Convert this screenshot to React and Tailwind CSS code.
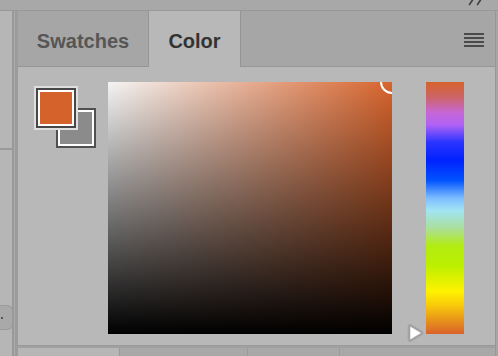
import React from 'react';

const FONT = { fontFamily: '"Liberation Sans", Arial, sans-serif' };

const Chevrons = () => (
  <svg className="absolute right-[14px] top-0" width="16" height="6" viewBox="0 0 16 6">
    <path d="M1.5 4.5 L4.5 0" stroke="#3f3f3f" strokeWidth="1.6" strokeLinecap="round" fill="none" />
    <path d="M9.5 4.5 L12.5 0" stroke="#3f3f3f" strokeWidth="1.6" strokeLinecap="round" fill="none" />
  </svg>
);

const Hamburger = () => (
  <div className="flex flex-col gap-[2px] w-[20px]">
    <div className="h-[2px] bg-[#4b4b4b]" />
    <div className="h-[2px] bg-[#4b4b4b]" />
    <div className="h-[2px] bg-[#4b4b4b]" />
    <div className="h-[2px] bg-[#4b4b4b]" />
  </div>
);

const Swatches = () => (
  <div className="relative w-[62px] h-[62px] mt-[4px] shrink-0">
    {/* background colour */}
    <div className="absolute left-[22px] top-[22px] w-[40px] h-[40px] border-2 border-[#505050] bg-white p-[2px]">
      <div className="w-full h-full bg-[#8b8b8b]" />
    </div>
    {/* foreground colour */}
    <div className="absolute left-0 top-0 w-[44px] h-[44px] border-2 border-[#dedede] bg-[#474747] p-[2px]">
      <div className="w-full h-full bg-white p-[2px]">
        <div className="w-full h-full bg-[#d5622a]" />
      </div>
    </div>
  </div>
);

const ColorField = () => (
  <div className="relative ml-[12px] w-[284px] h-[252px] shrink-0 overflow-hidden bg-[linear-gradient(to_bottom,rgba(0,0,0,0)_0%,rgba(0,0,0,0.45)_45%,#000_100%),linear-gradient(to_right,#f4f4f4,#d7642d)]">
    <div className="absolute right-[-12px] top-[-12px] w-[24px] h-[24px] rounded-full border-2 border-white" />
  </div>
);

const HueBar = () => (
  <div className="relative ml-[34px] w-[38px] h-[252px] shrink-0">
    <div className="w-full h-full bg-[linear-gradient(to_bottom,#d6632b_0%,#cc6466_6%,#c866d4_12%,#b062f6_17%,#2a34ff_24%,#0022ff_31%,#0052ff_39%,#7cbcff_46%,#a2e4f4_51%,#aadf9c_58%,#b2ec12_65%,#bcf000_73%,#fff200_83%,#f9cf08_88%,#d9622a_100%)]" />
    <svg className="absolute left-[-22px] top-[240px]" width="22" height="22" viewBox="0 0 22 22">
      <path d="M5 4.5 Q5 2.6 6.8 3.5 L17.6 10 Q18.8 11 17.6 12 L6.8 18.5 Q5 19.4 5 17.5 Z" fill="#ffffff" stroke="#a3a3a3" strokeWidth="2.6" strokeLinejoin="round" />
    </svg>
  </div>
);

export default function App() {
  return (
    <div className="w-[498px] h-[356px] overflow-hidden flex flex-col bg-[#a7a7a7]" style={FONT}>
      {/* top strip */}
      <div className="relative h-[11px] shrink-0 bg-[#a8a8a8] border-b border-[#989898]">
        <Chevrons />
      </div>

      <div className="flex flex-1 min-h-0">
        {/* left dock strip */}
        <div className="flex shrink-0">
          <div className="relative w-[12px] bg-[#b6b6b6] flex flex-col">
            <div className="h-[137px]" />
            <div className="h-[2px] bg-[#9a9a9a]" />
            <div className="absolute left-0 top-[294px] w-[13px] h-[25px] rounded-r-[6px] bg-[#a9a9a9] border border-l-0 border-[#9a9a9a] flex items-center">
              <div className="w-[2px] h-[2px] ml-[1px] bg-[#555]" />
            </div>
          </div>
          <div className="w-[2px] bg-[#999999]" />
          <div className="w-[1px] bg-[#ababab]" />
          <div className="w-[3px] bg-[#9c9c9c]" />
        </div>

        {/* panel */}
        <div className="flex-1 flex flex-col min-w-0">
          {/* tabs */}
          <div className="flex h-[56px] shrink-0">
            <div className="w-[131px] bg-[#a6a6a6] border-r border-b border-[#959595] flex items-center justify-center pt-[4px]">
              <span className="text-[20px] font-bold text-[#565656]">Swatches</span>
            </div>
            <div className="w-[92px] bg-[#b8b8b8] border-r border-[#959595] flex items-center justify-center pt-[4px]">
              <span className="text-[20px] font-bold text-[#333333]">Color</span>
            </div>
            <div className="flex-1 bg-[#a6a6a6] border-b border-[#979797] flex items-center justify-end pr-[11px] pt-[2px]">
              <Hamburger />
            </div>
          </div>

          {/* content */}
          <div className="h-[278px] shrink-0 bg-[#b8b8b8] flex items-start pl-[16px] pt-[15px]">
            <Swatches />
            <ColorField />
            <HueBar />
          </div>

          <div className="h-[3px] shrink-0 bg-[#a0a0a0] border-t border-[#999999]" />

          {/* bottom strip */}
          <div className="flex h-[8px] shrink-0">
            <div className="w-[102px] bg-[#b6b6b6] border-r border-[#999999]" />
            <div className="w-[128px] bg-[#a8a8a8] border-r border-[#999999]" />
            <div className="w-[92px] bg-[#a8a8a8] border-r border-[#999999]" />
            <div className="flex-1 bg-[#a8a8a8]" />
          </div>
        </div>

        {/* right edge */}
        <div className="w-[3px] shrink-0 bg-[#a6a6a6] border-l border-[#979797]" />
      </div>
    </div>
  );
}
